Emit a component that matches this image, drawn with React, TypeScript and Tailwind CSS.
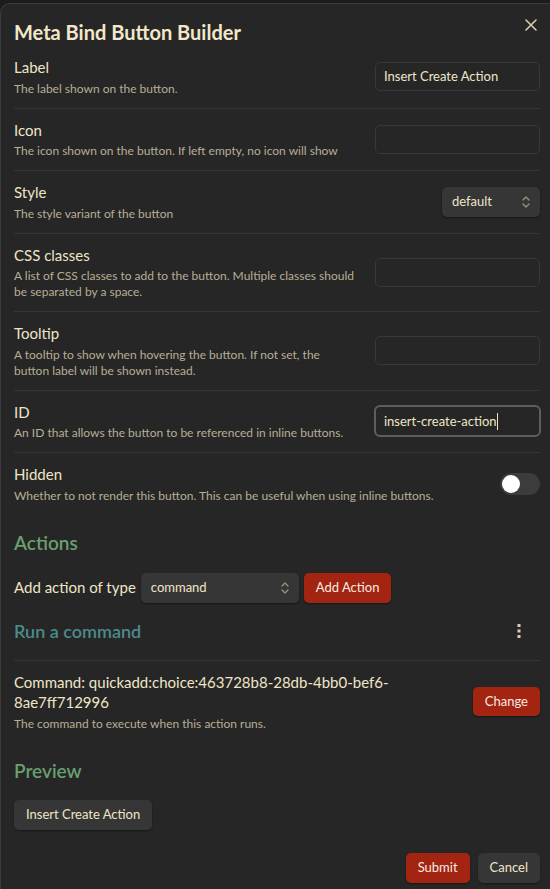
import React from 'react';

const font = { fontFamily: '"Segoe UI", Lato, "Noto Sans", sans-serif' };

function Chevrons() {
  return (
    <svg width="10" height="14" viewBox="0 0 10 14" fill="none" stroke="#9a9282" strokeWidth="1.3" strokeLinecap="round" strokeLinejoin="round">
      <path d="M2 5 L5 2 L8 5" />
      <path d="M2 9 L5 12 L8 9" />
    </svg>
  );
}

function Setting({ name, desc, children, first }: {
  name: string; desc: React.ReactNode; children?: React.ReactNode; first?: boolean;
}) {
  return (
    <div className={'flex items-center gap-4 py-[11px] ' + (first ? '' : 'border-t border-[#363636]')}>
      <div className="flex-1 min-w-0">
        <div className="text-[15px] leading-5 text-[#efe5c6]">{name}</div>
        <div className="mt-[3.5px] text-[12px] leading-[16px] text-[#b8ae95]">{desc}</div>
      </div>
      <div className="shrink-0 flex justify-end">{children}</div>
    </div>
  );
}

function TextInput({ value, focused }: { value?: string; focused?: boolean }) {
  if (focused) {
    return (
      <div className="-mr-px w-[167px] h-[32px] rounded-[6px] border-2 border-[#5e5e5e] bg-[#262626] flex items-center px-[8px] text-[13px] text-[#efe5c6]">
        {value}<span className="w-px h-[17px] bg-[#efe5c6]" />
      </div>
    );
  }
  return (
    <div className="w-[165px] h-[29px] rounded-[5px] border border-[#383838] bg-[#262626] flex items-center px-[8px] text-[13px] text-[#efe5c6]">
      {value}
    </div>
  );
}

function Select({ value, width }: { value: string; width: string }) {
  return (
    <div className={width + ' h-[30px] rounded-[5px] bg-[#363636] shadow-[0_1px_2px_rgba(0,0,0,0.4)] flex items-center justify-between pl-[10px] pr-[9px] text-[13px] text-[#efe5c6]'}>
      <span>{value}</span>
      <Chevrons />
    </div>
  );
}

export default function App() {
  return (
    <div className="w-[550px] h-[889px] bg-[#1c1c1c] overflow-hidden" style={font}>
      <div className="h-[3px]" />
      <div className="relative h-[886px] rounded-tl-[10px] border-t border-l border-[#3c3c3c] bg-[#262626] pl-[13px] pr-[10px] pt-[15px]">
        <svg className="absolute right-[13px] top-[15px]" width="12" height="12" viewBox="0 0 12 12" stroke="#d8cdb0" strokeWidth="1.6" strokeLinecap="round">
          <path d="M1 1 L11 11 M11 1 L1 11" />
        </svg>
        <h1 className="text-[20px] leading-[27px] font-bold text-[#f2e8c9]">Meta Bind Button Builder</h1>
        <div>
          <Setting first name="Label" desc="The label shown on the button.">
            <TextInput value="Insert Create Action" />
          </Setting>
          <Setting name="Icon" desc="The icon shown on the button. If left empty, no icon will show">
            <TextInput />
          </Setting>
          <Setting name="Style" desc="The style variant of the button">
            <Select value="default" width="w-[98px]" />
          </Setting>
          <Setting name="CSS classes" desc={<>A list of CSS classes to add to the button. Multiple classes should<br />be separated by a space.</>}>
            <TextInput />
          </Setting>
          <Setting name="Tooltip" desc={<>A tooltip to show when hovering the button. If not set, the<br />button label will be shown instead.</>}>
            <TextInput />
          </Setting>
          <Setting name="ID" desc="An ID that allows the button to be referenced in inline buttons.">
            <TextInput value="insert-create-action" focused />
          </Setting>
          <Setting name="Hidden" desc="Whether to not render this button. This can be useful when using inline buttons.">
            <div className="w-[40px] h-[22px] rounded-full bg-[#3c3c3c] flex items-center pl-[2px]">
              <div className="w-[18px] h-[18px] rounded-full bg-white" />
            </div>
          </Setting>
        </div>

        <h2 className="mt-[15px] text-[19px] leading-[26px] font-semibold text-[#6a9f70]">Actions</h2>
        <div className="mt-[17px] flex items-center gap-[5px]">
          <span className="text-[15px] text-[#efe5c6]">Add action of type</span>
          <Select value="command" width="w-[158px]" />
          <button className="h-[30px] px-[12px] rounded-[5px] bg-[#a32410] text-[13px] text-[#f5ece0] shadow-[0_1px_2px_rgba(0,0,0,0.4)]">Add Action</button>
        </div>

        <div className="mt-[16px] flex items-center justify-between pr-[19px]">
          <h3 className="text-[18px] leading-[24px] font-semibold text-[#4b8b8b]">Run a command</h3>
          <svg width="4" height="14" viewBox="0 0 4 14" fill="#d8cdb0">
            <rect x="0.5" y="0" width="3" height="3" />
            <rect x="0.5" y="5.5" width="3" height="3" />
            <rect x="0.5" y="11" width="3" height="3" />
          </svg>
        </div>

        <div className="mt-[17px] border-t border-[#363636] flex items-center gap-4 py-[11px]">
          <div className="flex-1">
            <div className="text-[15px] leading-5 text-[#efe5c6]">Command: quickadd:choice:463728b8-28db-4bb0-bef6-<br />8ae7ff712996</div>
            <div className="mt-[3px] text-[12px] leading-[17px] text-[#b8ae95]">The command to execute when this action runs.</div>
          </div>
          <button className="h-[29px] px-[12px] rounded-[5px] bg-[#a32410] text-[13px] text-[#f5ece0] shadow-[0_1px_2px_rgba(0,0,0,0.4)]">Change</button>
        </div>

        <h2 className="mt-[15px] text-[19px] leading-[26px] font-semibold text-[#6a9f70]">Preview</h2>
        <button className="mt-[16px] h-[30px] px-[12px] rounded-[5px] bg-[#363636] text-[13px] text-[#efe5c6] shadow-[0_1px_2px_rgba(0,0,0,0.4)]">Insert Create Action</button>

        <div className="mt-[23px] flex justify-end gap-[8px]">
          <button className="h-[30px] px-[12px] rounded-[5px] bg-[#a32410] text-[13px] text-[#f5ece0] shadow-[0_1px_2px_rgba(0,0,0,0.4)]">Submit</button>
          <button className="h-[30px] px-[12px] rounded-[5px] bg-[#363636] text-[13px] text-[#efe5c6] shadow-[0_1px_2px_rgba(0,0,0,0.4)]">Cancel</button>
        </div>
      </div>
    </div>
  );
}
